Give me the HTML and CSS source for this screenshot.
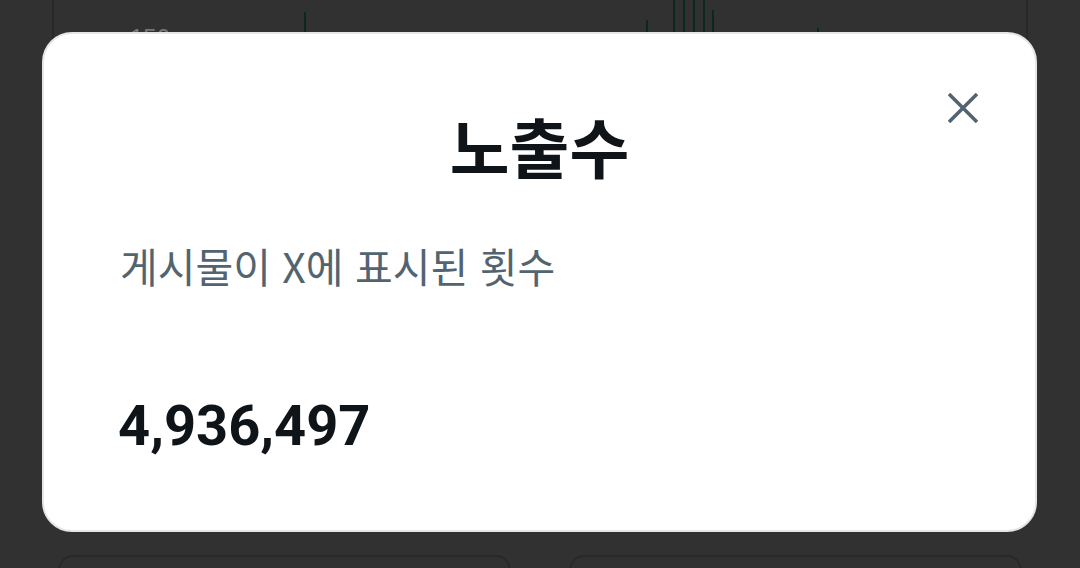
FILE: index.html
```html
<!DOCTYPE html>
<html lang="ko">

<head>
    <meta charset="UTF-8">
    <meta name="viewport" content="width=device-width, initial-scale=1.0">
    <title>노출수</title>
    <link rel="stylesheet" href="styles.css">
</head>

<body>
    <div class="page">
        <div class="chart-card">
            <div class="chart">
                <span class="axis-label">150</span>
                <span class="bar" style="left: 250px; top: 12px; height: 20px"></span>
                <span class="bar" style="left: 592px; top: 20px; height: 12px"></span>
                <span class="bar" style="left: 619px; top: 0; height: 32px"></span>
                <span class="bar" style="left: 629px; top: 0; height: 32px"></span>
                <span class="bar" style="left: 639px; top: 0; height: 32px"></span>
                <span class="bar" style="left: 649px; top: 0; height: 32px"></span>
                <span class="bar" style="left: 658px; top: 10px; height: 22px"></span>
                <span class="bar" style="left: 763px; top: 28px; height: 4px"></span>
            </div>
        </div>

        <div class="stat-row">
            <div class="stat-card"></div>
            <div class="stat-card"></div>
        </div>
    </div>

    <!-- 노출수 설명 팝업 -->
    <div class="modal">
        <button class="close-button" aria-label="닫기">
            <svg viewBox="0 0 30 30" width="30" height="30">
                <path d="M1 1L29 29M29 1L1 29" />
            </svg>
        </button>
        <h1 class="modal-title">노출수</h1>
        <p class="modal-text">게시물이 X에 표시된 횟수</p>
        <div class="modal-value">4,936,497</div>
    </div>
</body>

</html>
```

FILE: styles.css
```css
:root {
    --bg: #313131;
    --card-border: #292929;
    --text: #0f1419;
    --muted: #536471;
}

body {
    margin: 0;
    padding: 0;
    height: 568px;
    background: var(--bg);
    font-family: "Noto Sans CJK KR", "Noto Sans", sans-serif;
    overflow: hidden;
}

.page {
    padding: 0 52px;
}

.chart-card {
    height: 510px;
    border: 2px solid var(--card-border);
    border-top: none;
    border-radius: 0 0 30px 30px;
}

.chart {
    position: relative;
    height: 100%;
}

.axis-label {
    position: absolute;
    left: 76px;
    top: 24px;
    font-family: "Liberation Sans", sans-serif;
    font-size: 24px;
    color: #777;
}

.bar {
    position: absolute;
    width: 2px;
    background: #0a281b;
}

.stat-row {
    display: grid;
    grid-template-columns: 1fr 1fr;
    gap: 58px;
    padding: 43px 6px 0;
}

.stat-card {
    height: 13px;
    border: 2px solid var(--card-border);
    border-bottom: none;
    border-radius: 30px 30px 0 0;
}

.modal {
    position: absolute;
    left: 42px;
    top: 32px;
    width: 991px;
    height: 496px;
    background: #fff;
    border: 2px solid #e3e7ea;
    border-radius: 30px;
}

.close-button {
    position: absolute;
    right: 57px;
    top: 59px;
    width: 30px;
    height: 30px;
    padding: 0;
    border: none;
    background: none;
}

.close-button svg {
    display: block;
    stroke: var(--muted);
    stroke-width: 3.5;
    fill: none;
}

.modal-title {
    margin: 0;
    padding-top: 71px;
    text-align: center;
    font-size: 65px;
    line-height: 80px;
    font-weight: 700;
    color: var(--text);
}

.modal-text {
    margin: 52px 0 0 76px;
    font-size: 41px;
    line-height: 56px;
    color: var(--muted);
}

.modal-value {
    margin: 101px 0 0 74px;
    font-family: Roboto, "Liberation Sans", sans-serif;
    font-size: 56px;
    line-height: 64px;
    font-weight: 700;
    color: var(--text);
}
```
